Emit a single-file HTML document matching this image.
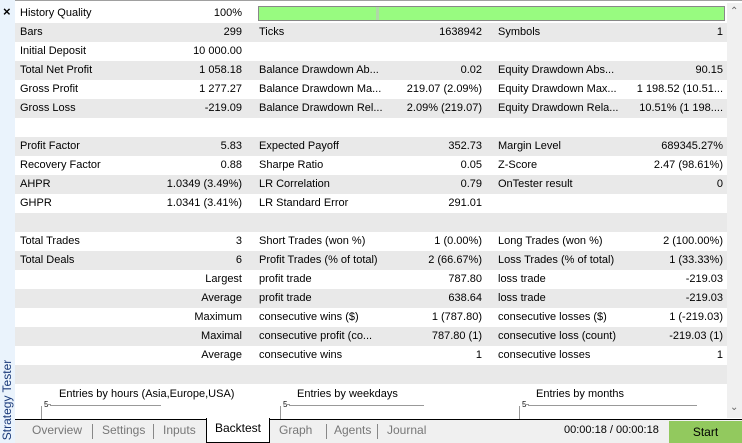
<!DOCTYPE html>
<html><head><style>
*{margin:0;padding:0;box-sizing:border-box}
body{width:742px;height:443px;overflow:hidden;background:#fff;font-family:"Liberation Sans",sans-serif;font-size:11px;color:#000;position:relative}
.strip{position:absolute;left:0;top:0;width:15px;height:443px;background:#eaf3fc}
.top{position:absolute;left:0;top:0;width:742px;height:3px;border-top:1px solid #a0a0a0}
.row{position:absolute;left:15px;width:712px;height:19px;line-height:19px;white-space:nowrap}
.g{background:#e9e9e9}
.row span{position:absolute;top:0}
.l1{left:5px}.v1{right:485px;text-align:right}
.l2{left:244px}.v2{right:245px;text-align:right}
.l3{left:483px}.v3{right:4px;text-align:right}
.sb{position:absolute;left:727px;top:3px;width:15px;height:415px;background:#f0f0f0}
.tabs{position:absolute;left:15px;top:419px;width:727px;height:24px;background:#f0f0f0;border-top:1px solid #000;color:#777;font-size:12px}
.tabs span{position:absolute;top:3px}
.sep{position:absolute;top:4px;width:1px;height:15px;background:#888}
</style></head><body>
<div class="top"></div>
<div class="strip"></div>
<div style="position:absolute;left:3px;top:4px;font-size:13px;font-weight:bold">×</div>
<div style="position:absolute;left:-36px;top:393px;width:86px;transform:rotate(-90deg);font-size:12px;color:#1a3a7a;text-align:center;line-height:14px;white-space:nowrap">Strategy Tester</div>

<div class="row" style="top:4px"><span class="l1">History Quality</span><span class="v1">100%</span></div>
<div style="position:absolute;left:258px;top:6px;width:467px;height:15px;background:#98fb80;border:1px solid #888"></div>
<div style="position:absolute;left:376px;top:7px;width:3px;height:13px;background:#b0d8a8"></div>
<div class="row g" style="top:23px"><span class="l1">Bars</span><span class="v1">299</span><span class="l2">Ticks</span><span class="v2">1638942</span><span class="l3">Symbols</span><span class="v3">1</span></div>
<div class="row" style="top:42px"><span class="l1">Initial Deposit</span><span class="v1">10 000.00</span></div>
<div class="row g" style="top:61px"><span class="l1">Total Net Profit</span><span class="v1">1 058.18</span><span class="l2">Balance Drawdown Ab...</span><span class="v2">0.02</span><span class="l3">Equity Drawdown Abs...</span><span class="v3">90.15</span></div>
<div class="row" style="top:80px"><span class="l1">Gross Profit</span><span class="v1">1 277.27</span><span class="l2">Balance Drawdown Ma...</span><span class="v2">219.07 (2.09%)</span><span class="l3">Equity Drawdown Max...</span><span class="v3">1 198.52 (10.51...</span></div>
<div class="row g" style="top:99px"><span class="l1">Gross Loss</span><span class="v1">-219.09</span><span class="l2">Balance Drawdown Rel...</span><span class="v2">2.09% (219.07)</span><span class="l3">Equity Drawdown Rela...</span><span class="v3">10.51% (1 198....</span></div>
<div class="row" style="top:118px"></div>
<div class="row g" style="top:137px"><span class="l1">Profit Factor</span><span class="v1">5.83</span><span class="l2">Expected Payoff</span><span class="v2">352.73</span><span class="l3">Margin Level</span><span class="v3">689345.27%</span></div>
<div class="row" style="top:156px"><span class="l1">Recovery Factor</span><span class="v1">0.88</span><span class="l2">Sharpe Ratio</span><span class="v2">0.05</span><span class="l3">Z-Score</span><span class="v3">2.47 (98.61%)</span></div>
<div class="row g" style="top:175px"><span class="l1">AHPR</span><span class="v1">1.0349 (3.49%)</span><span class="l2">LR Correlation</span><span class="v2">0.79</span><span class="l3">OnTester result</span><span class="v3">0</span></div>
<div class="row" style="top:194px"><span class="l1">GHPR</span><span class="v1">1.0341 (3.41%)</span><span class="l2">LR Standard Error</span><span class="v2">291.01</span></div>
<div class="row g" style="top:213px"></div>
<div class="row" style="top:232px"><span class="l1">Total Trades</span><span class="v1">3</span><span class="l2">Short Trades (won %)</span><span class="v2">1 (0.00%)</span><span class="l3">Long Trades (won %)</span><span class="v3">2 (100.00%)</span></div>
<div class="row g" style="top:251px"><span class="l1">Total Deals</span><span class="v1">6</span><span class="l2">Profit Trades (% of total)</span><span class="v2">2 (66.67%)</span><span class="l3">Loss Trades (% of total)</span><span class="v3">1 (33.33%)</span></div>
<div class="row" style="top:270px"><span class="v1">Largest</span><span class="l2">profit trade</span><span class="v2">787.80</span><span class="l3">loss trade</span><span class="v3">-219.03</span></div>
<div class="row g" style="top:289px"><span class="v1">Average</span><span class="l2">profit trade</span><span class="v2">638.64</span><span class="l3">loss trade</span><span class="v3">-219.03</span></div>
<div class="row" style="top:308px"><span class="v1">Maximum</span><span class="l2">consecutive wins ($)</span><span class="v2">1 (787.80)</span><span class="l3">consecutive losses ($)</span><span class="v3">1 (-219.03)</span></div>
<div class="row g" style="top:327px"><span class="v1">Maximal</span><span class="l2">consecutive profit (co...</span><span class="v2">787.80 (1)</span><span class="l3">consecutive loss (count)</span><span class="v3">-219.03 (1)</span></div>
<div class="row" style="top:346px"><span class="v1">Average</span><span class="l2">consecutive wins</span><span class="v2">1</span><span class="l3">consecutive losses</span><span class="v3">1</span></div>
<div class="row g" style="top:365px"></div>

<div style="position:absolute;left:59px;top:388px;font-size:11px">Entries by hours (Asia,Europe,USA)</div>
<div style="position:absolute;left:297px;top:388px;font-size:11px">Entries by weekdays</div>
<div style="position:absolute;left:536px;top:388px;font-size:11px">Entries by months</div>
<div style="position:absolute;left:44px;top:400px;font-size:8px">5</div>
<div style="position:absolute;left:283px;top:400px;font-size:8px">5</div>
<div style="position:absolute;left:522px;top:400px;font-size:8px">5</div>
<div style="position:absolute;left:50px;top:405px;width:111px;height:1px;background:#999"></div>
<div style="position:absolute;left:289px;top:405px;width:135px;height:1px;background:#999"></div>
<div style="position:absolute;left:528px;top:405px;width:169px;height:1px;background:#999"></div>
<div style="position:absolute;left:41px;top:406px;width:1px;height:13px;background:#999"></div>
<div style="position:absolute;left:280px;top:406px;width:1px;height:13px;background:#999"></div>
<div style="position:absolute;left:519px;top:406px;width:1px;height:13px;background:#999"></div>
<div style="position:absolute;left:47px;top:404px;width:4px;height:1px;background:#999"></div>
<div style="position:absolute;left:286px;top:404px;width:4px;height:1px;background:#999"></div>
<div style="position:absolute;left:525px;top:404px;width:4px;height:1px;background:#999"></div>

<div class="sb"></div>
<div style="position:absolute;left:730px;top:6px;font-size:10px;color:#666">&#8963;</div>
<div style="position:absolute;left:730px;top:402px;font-size:10px;color:#666">&#8964;</div>

<div class="tabs">
<span style="left:17px">Overview</span><div class="sep" style="left:77px"></div>
<span style="left:87px">Settings</span><div class="sep" style="left:138px"></div>
<span style="left:148px">Inputs</span>
<div style="position:absolute;left:191px;top:-2px;width:64px;height:25px;background:#fff;border:1px solid #000;border-top:none;color:#000;padding:3px 0 0 8px">Backtest</div>
<span style="left:264px">Graph</span><div class="sep" style="left:311px"></div>
<span style="left:319px">Agents</span><div class="sep" style="left:362px"></div>
<span style="left:372px;">Journal</span>
<span style="left:549px;color:#000;font-size:11px;top:4px">00:00:18 / 00:00:18</span>
<div style="position:absolute;left:654px;top:1px;width:73px;height:22px;background:#92c95e;color:#000;text-align:center;line-height:22px">Start</div>
</div>
</body></html>
